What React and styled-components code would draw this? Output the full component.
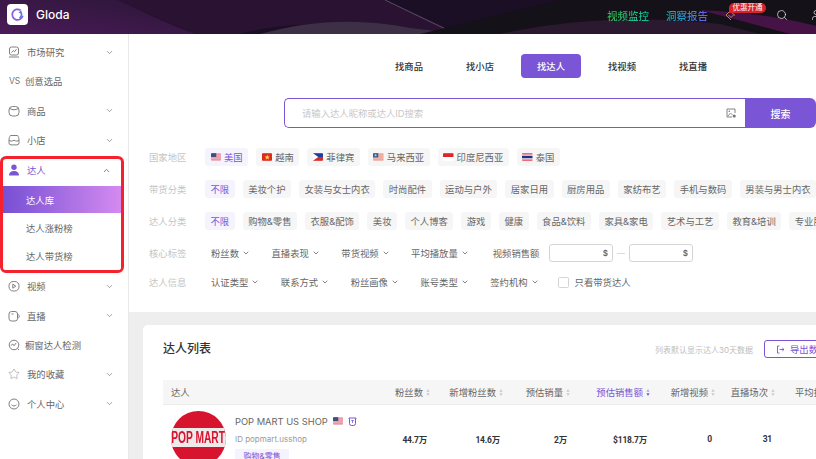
import React from "react"
import styled, { createGlobalStyle } from "styled-components"
import { ChevronDown, ChevronUp, Search, Star, User } from "lucide-react"

const purple = "#7a55d6"

const GlobalStyle = createGlobalStyle`
  html, body { margin: 0; padding: 0; background: #fff; }
  * { box-sizing: border-box; }
  body { font-family: Inter, "Noto Sans CJK SC", sans-serif; }
`

const Flag = ({ name }) => {
  const flags = {
    us: (
      <>
        <rect width="11" height="8" fill="#f6d5da" />
        <path d="M0 1h11M0 3h11M0 5h11M0 7h11" stroke="#e2707f" strokeWidth="1" />
        <rect width="5.500" height="4" fill="#3d4f85" />
      </>
    ),
    vn: (
      <>
        <rect width="11" height="8" fill="#e02a20" />
        <path d="M5.500 1.600l.8 2h2l-1.600 1.200.6 2-1.800-1.200-1.800 1.200.6-2-1.600-1.200h2z" fill="#fbd74a" />
      </>
    ),
    ph: (
      <>
        <rect width="11" height="4" fill="#1b3f9c" />
        <rect y="4" width="11" height="4" fill="#d92a2a" />
        <path d="M0 0l5.500 4-5.500 4z" fill="#fff" />
      </>
    ),
    my: (
      <>
        <rect width="11" height="8" fill="#f6d0c8" />
        <path d="M0 1h11M0 3h11M0 5h11M0 7h11" stroke="#e98a7d" strokeWidth="1" />
        <rect width="5.500" height="4.400" fill="#2f5d9a" />
        <circle cx="2.700" cy="2.200" r="1.100" fill="#f3d55b" />
      </>
    ),
    id: (
      <>
        <rect width="11" height="4" fill="#e0242c" />
        <rect y="4" width="11" height="4" fill="#fff" />
      </>
    ),
    th: (
      <>
        <rect width="11" height="8" fill="#f0f0f5" />
        <rect width="11" height="1.400" fill="#ee4a5e" />
        <rect y="2.700" width="11" height="2.600" fill="#242f86" />
        <rect y="6.600" width="11" height="1.400" fill="#ee4a5e" />
      </>
    ),
  }
  return <FlagSvg viewBox="0 0 11 8">{flags[name]}</FlagSvg>
}

const stroke = { fill: "none", stroke: "#808080", strokeWidth: 1 }

const icons = {
  market: (
    <g {...stroke}>
      <rect x="1.500" y="1" width="9" height="8" rx="2" />
      <path d="M3.500 6.500l1.800-1.800 1.200 1 2-2.500M1 11h10" />
    </g>
  ),
  goods: (
    <g {...stroke}>
      <rect x="1" y="1.500" width="10" height="9.500" rx="3.500" />
      <path d="M2 3.600c2.400 1.600 5.600 1.600 8 0" />
    </g>
  ),
  shop: (
    <g {...stroke}>
      <path d="M2.400 1.500h7.200c1 1.400 1.400 2.800 1.400 4.400v3a2 2 0 0 1-2 2H3a2 2 0 0 1-2-2v-3c0-1.600.4-3 1.400-4.400z" />
      <path d="M1 6.200c1.400 1.200 2.800 1.200 5 0 2.200 1.200 3.600 1.200 5 0" />
    </g>
  ),
  video: (
    <g {...stroke}>
      <rect x="1" y="1.500" width="10" height="9.500" rx="4.200" />
      <path d="M4.800 4.200l3 2-3 2z" />
    </g>
  ),
  live: (
    <g {...stroke}>
      <rect x="1" y="1.500" width="8.500" height="9.500" rx="2.500" />
      <path d="M9.500 4.500c1.200 0 1.800.8 1.800 1.800S10.700 8 9.500 8M3.500 4h2" />
    </g>
  ),
  check: (
    <g {...stroke}>
      <circle cx="6" cy="6" r="4.800" />
      <path d="M2.800 6.500l2-1.500 1.300 1.800 2-2.800M9.500 9.500l1.500 1.500" />
    </g>
  ),
  me: (
    <g {...stroke}>
      <circle cx="6" cy="6" r="5" />
      <path d="M3.500 6.800c1.400 1.500 3.600 1.500 5 0" />
    </g>
  ),
}

const NavIcon = ({ name }) => <NavSvg viewBox="0 0 12 12">{icons[name]}</NavSvg>

const SortIcon = ({ active }) => (
  <SortSvg viewBox="0 0 4 7">
    <path d="M2 0l1.600 2.700H.4z" fill={active ? "#b9a6ea" : "#c9c9c9"} />
    <path d="M2 7L.4 4.300h3.200z" fill={active ? purple : "#c9c9c9"} />
  </SortSvg>
)

const Dropdown = ({ children }) => (
  <DropItem>
    {children}
    <ChevronDown size={8} strokeWidth={2.400} />
  </DropItem>
)

const nav1 = [
  { icon: "market", text: "市场研究", more: true },
  { vs: true, text: "创意选品" },
  { icon: "goods", text: "商品", more: true },
  { icon: "shop", text: "小店", more: true },
]

const nav2 = [
  { icon: "video", text: "视频", more: true },
  { icon: "live", text: "直播", more: true },
  { icon: "check", text: "橱窗达人检测", tight: true },
  { star: true, text: "我的收藏", more: true },
  { icon: "me", text: "个人中心", more: true },
]

const renderNav = (item) => (
  <NavItem key={item.text}>
    {item.vs && <VsMark>VS</VsMark>}
    {item.icon && <NavIcon name={item.icon} />}
    {item.star && <Star size={12} strokeWidth={1} color="#808080" />}
    <NavText $tight={item.vs || item.tight}>{item.text}</NavText>
    {item.more && <NavChevron><ChevronDown size={9} strokeWidth={2} /></NavChevron>}
  </NavItem>
)

const countries = [
  ["us", "美国", true],
  ["vn", "越南"],
  ["ph", "菲律宾"],
  ["my", "马来西亚"],
  ["id", "印度尼西亚"],
  ["th", "泰国"],
]

const goods = ["美妆个护", "女装与女士内衣", "时尚配件", "运动与户外", "居家日用", "厨房用品", "家纺布艺", "手机与数码", "男装与男士内衣"]
const creators = ["购物&零售", "衣服&配饰", "美妆", "个人博客", "游戏", "健康", "食品&饮料", "家具&家电", "艺术与工艺", "教育&培训", "专业服务"]
const tabs = ["找商品", "找小店", "找达人", "找视频", "找直播"]

const columns = [
  { text: "粉丝数", value: "44.7万", width: 72 },
  { text: "新增粉丝数", value: "14.6万", width: 73 },
  { text: "预估销量", value: "2万", width: 67 },
  { text: "预估销售额", value: "$118.7万", width: 80, active: true },
  { text: "新增视频", value: "0", width: 65 },
  { text: "直播场次", value: "31", width: 60 },
]

export default function App() {
  return (
    <Page>
      <GlobalStyle />
      <Header>
        <HeaderArt viewBox="0 0 816 34" preserveAspectRatio="none">
          <defs>
            <linearGradient id="left" x1="0" y1="1" x2="1" y2="0">
              <stop offset="0" stopColor="#4a1a58" />
              <stop offset="1" stopColor="#2a1636" />
            </linearGradient>
          </defs>
          <path d="M0 0h118c30 14 50 24 78 34H0z" fill="url(#left)" />
          <path d="M150 0h235l75 34H420c-70-12-130-14-180 0h-44C170 24 140 10 118 0z" fill="#2a1233" />
          <path d="M260 34c50-14 100-16 150-6l50 6z" fill="#3d2f45" />
          <path d="M385 0l75 36" stroke="#6a5a70" strokeWidth=".8" />
          <path d="M420 34L560 0h256v34z" fill="#141118" />
          <path d="M500 34c70-16 150-18 220-10l40 10z" fill="#2b1930" />
          <path d="M700 10l90 24h26v-8c-30-8-70-14-116-16z" fill="#5a1458" opacity=".7" />
        </HeaderArt>
        <Logo>
          <svg viewBox="0 0 21 21" width="21" height="21">
            <rect width="21" height="21" rx="4" fill="#fff" />
            <path d="M13.500 6.200a5.300 5.300 0 1 0 2.200 5.600" fill="none" stroke="#8a5be8" strokeWidth="1.800" />
            <path d="M12.500 14a4 4 0 0 0 1.500-5.500" fill="none" stroke="#4a86e8" strokeWidth="1.700" />
            <path d="M11.500 8.800l2.700-2.800.7 3.600z" fill="#5a78e8" />
          </svg>
        </Logo>
        <Brand>Gloda</Brand>
        <HeaderRight>
          <GradientLink $from="#35c24e" $to="#10bfa0">视频监控</GradientLink>
          <GradientLink $from="#12b9b4" $to="#6a5df0">洞察报告</GradientLink>
          <VipWrap>
            <svg viewBox="0 0 12 12" width="12" height="12">
              <path d="M6 11L1 6l4-4 5 4.500M3.500 6L6 8.500 9 5.500" fill="none" stroke="#b08a4e" strokeWidth="1" />
            </svg>
            <VipBadge>优惠开通</VipBadge>
          </VipWrap>
          <Search size={12} strokeWidth={1.300} color="#fff" />
          <UserSlot>
            <User size={12} strokeWidth={1.300} color="#fff" />
          </UserSlot>
        </HeaderRight>
      </Header>
      <Body>
        <Sidebar>
          {nav1.map(renderNav)}
          <NavGroup>
            <GroupHead>
              <svg viewBox="0 0 12 12" width="12" height="12">
                <circle cx="6" cy="3.200" r="2.700" fill={purple} />
                <path d="M1 11.500c0-3 1.800-4.500 5-4.500s5 1.500 5 4.500z" fill={purple} />
              </svg>
              <NavText>达人</NavText>
              <NavChevron $active><ChevronUp size={9} strokeWidth={2.400} /></NavChevron>
            </GroupHead>
            <SubItem $active>达人库</SubItem>
            <SubItem>达人涨粉榜</SubItem>
            <SubItem>达人带货榜</SubItem>
          </NavGroup>
          {nav2.map(renderNav)}
        </Sidebar>
        <Main>
          <SearchPanel>
            <Tabs>
              {tabs.map((t) => (
                <Tab key={t} $active={t === "找达人"}>{t}</Tab>
              ))}
            </Tabs>
            <SearchBar>
              <SearchInput>
                请输入达人昵称或达人ID搜索
                <svg viewBox="0 0 10 10" width="10" height="10">
                  <path d="M9 5V1H1v8h5" fill="none" stroke="#777" strokeWidth=".9" />
                  <path d="M2 8l2.500-3 2 2" fill="none" stroke="#777" strokeWidth=".8" />
                  <circle cx="3.300" cy="3.200" r=".8" fill="#777" />
                  <circle cx="8.200" cy="8" r="1.600" fill="#777" />
                </svg>
              </SearchInput>
              <SearchButton>搜索</SearchButton>
            </SearchBar>
            <Filters>
              <FilterRow>
                <FilterLabel>国家地区</FilterLabel>
                {countries.map(([flag, name, active]) => (
                  <Chip key={flag} $active={active}>
                    <Flag name={flag} />
                    {name}
                  </Chip>
                ))}
              </FilterRow>
              <FilterRow>
                <FilterLabel>带货分类</FilterLabel>
                <Chip $active>不限</Chip>
                {goods.map((g) => <Chip key={g}>{g}</Chip>)}
              </FilterRow>
              <FilterRow>
                <FilterLabel>达人分类</FilterLabel>
                <Chip $active>不限</Chip>
                {creators.map((c) => <Chip key={c}>{c}</Chip>)}
              </FilterRow>
              <FilterRow $wide>
                <WideLabel>核心标签</WideLabel>
                <Dropdown>粉丝数</Dropdown>
                <Dropdown>直播表现</Dropdown>
                <Dropdown>带货视频</Dropdown>
                <Dropdown>平均播放量</Dropdown>
                <RangeLabel>视频销售额</RangeLabel>
                <RangeInput>$</RangeInput>
                <RangeDash />
                <RangeInput>$</RangeInput>
              </FilterRow>
              <FilterRow $wide $tight>
                <WideLabel>达人信息</WideLabel>
                <Dropdown>认证类型</Dropdown>
                <Dropdown>联系方式</Dropdown>
                <Dropdown>粉丝画像</Dropdown>
                <Dropdown>账号类型</Dropdown>
                <Dropdown>签约机构</Dropdown>
                <CheckLabel>
                  <CheckBox />
                  只看带货达人
                </CheckLabel>
              </FilterRow>
            </Filters>
          </SearchPanel>
          <Card>
            <CardHead>
              <CardTitle>达人列表</CardTitle>
              <CardNote>列表默认显示达人30天数据</CardNote>
              <ExportButton>
                <svg viewBox="0 0 9 9" width="9" height="9">
                  <path d="M3.500 1H1.500v7h2M3.500 4.500h4.500M6.300 3L8 4.500 6.300 6" fill="none" stroke={purple} strokeWidth=".9" />
                </svg>
                导出数据
              </ExportButton>
            </CardHead>
            <TableHead>
              <CreatorHead>达人</CreatorHead>
              {columns.map((c) => (
                <HeadCell key={c.text} $width={c.width} $active={c.active}>
                  {c.text}
                  <SortIcon active={c.active} />
                </HeadCell>
              ))}
              <LastHead>平均播放</LastHead>
            </TableHead>
            <TableRow>
              <CreatorCell>
                <Avatar>
                  <AvatarBand>
                    <AvatarText>POP MART</AvatarText>
                  </AvatarBand>
                </Avatar>
                <CreatorInfo>
                  <CreatorName>
                    POP MART US SHOP
                    <Flag name="us" />
                    <svg viewBox="0 0 9 9" width="9" height="9">
                      <path d="M1 1h7v1H7.500v4.500a2 2 0 0 1-2 2h-2a2 2 0 0 1-2-2V2H1z" fill="none" stroke={purple} strokeWidth="1" />
                      <path d="M4.500 3.500v2.500M3.200 3.500h2.600" stroke={purple} strokeWidth=".8" />
                    </svg>
                  </CreatorName>
                  <CreatorId>ID popmart.usshop</CreatorId>
                  <CreatorTag>购物&零售</CreatorTag>
                </CreatorInfo>
              </CreatorCell>
              {columns.map((c) => (
                <ValueCell key={c.text} $width={c.width}>{c.value}</ValueCell>
              ))}
            </TableRow>
          </Card>
        </Main>
      </Body>
    </Page>
  )
}

const Page = styled.div`
  width: 816px;
  height: 459px;
  overflow: hidden;
  display: flex;
  flex-direction: column;
`

const Header = styled.header`
  position: relative;
  height: 34px;
  flex: none;
  display: flex;
  align-items: flex-start;
  padding: 4px 0 0 7px;
  background: #1a0f24;
  overflow: hidden;
`

const HeaderArt = styled.svg`
  position: absolute;
  inset: 0;
  width: 100%;
  height: 100%;
`

const Logo = styled.div`
  position: relative;
  width: 21px;
  height: 21px;
  line-height: 0;
`

const Brand = styled.div`
  position: relative;
  margin-left: 8px;
  color: #fff;
  font-size: 12px;
  font-weight: 500;
  line-height: 22px;
`

const HeaderRight = styled.div`
  position: relative;
  margin-left: auto;
  display: flex;
  align-items: center;
  height: 22px;
  margin-right: -6px;
`

const UserSlot = styled.div`
  display: flex;
  margin-left: 22px;
`

const GradientLink = styled.div`
  font-size: 10.500px;
  font-weight: 500;
  margin-right: 17px;
  white-space: nowrap;
  background: linear-gradient(90deg, ${(p) => p.$from}, ${(p) => p.$to});
  -webkit-background-clip: text;
  background-clip: text;
  color: transparent;
`

const VipWrap = styled.div`
  position: relative;
  width: 51px;
  height: 12px;
  line-height: 0;
`

const VipBadge = styled.span`
  position: absolute;
  left: 4px;
  top: -6px;
  width: 37px;
  height: 10px;
  border-radius: 5px 5px 5px 0;
  background: #d8202f;
  color: #fff;
  font-size: 7.500px;
  line-height: 10px;
  text-align: center;
  white-space: nowrap;
`

const Body = styled.div`
  flex: 1;
  display: flex;
  min-height: 0;
`

const Sidebar = styled.aside`
  width: 129px;
  flex: none;
  padding-top: 3.400px;
  background: #fff;
  border-right: 1px solid #e8e8e8;
`

const NavItem = styled.div`
  display: flex;
  align-items: center;
  height: 29.330px;
  padding: 0 14px 0 8px;
  gap: 7px;
  color: #666;
  font-size: 9.330px;
  white-space: nowrap;
`

const NavSvg = styled.svg`
  width: 12px;
  height: 12px;
  flex: none;
`

const VsMark = styled.span`
  font-size: 8.500px;
  width: 11px;
  margin-left: 1px;
  color: #777;
`

const NavText = styled.span`
  margin-left: ${(p) => (p.$tight ? "-2px" : "0")};
`

const NavChevron = styled.span`
  margin-left: auto;
  display: flex;
  color: ${(p) => (p.$active ? purple : "#808080")};
`

const NavGroup = styled.div`
  width: 124px;
  margin: 1.600px 0 -1.500px;
  border: 3px solid #f5222d;
  border-radius: 6px;
  overflow: hidden;
  color: ${purple};
`

const GroupHead = styled.div`
  display: flex;
  align-items: center;
  height: 27px;
  padding: 0 10px 5px 5px;
  gap: 7px;
  font-size: 9.330px;
`

const SubItem = styled.div`
  height: ${(p) => (p.$active ? "27px" : "28.500px")};
  padding-left: 23px;
  display: flex;
  align-items: center;
  font-size: 9.330px;
  color: ${(p) => (p.$active ? "#fff" : "#666")};
  background: ${(p) => (p.$active ? "linear-gradient(90deg, #7650d4, #d48af0)" : "#fff")};
`

const Main = styled.main`
  flex: 1;
  min-width: 0;
  background: #eeeeee;
  overflow: hidden;
`

const SearchPanel = styled.section`
  height: 278px;
  background: #fff;
  padding: 20px 0 0 20px;
  white-space: nowrap;
`

const Tabs = styled.nav`
  display: flex;
  gap: 11px;
  margin-left: 230px;
`

const Tab = styled.div`
  width: 60px;
  height: 24px;
  border-radius: 4px;
  display: flex;
  align-items: center;
  justify-content: center;
  font-size: 9.330px;
  font-weight: 500;
  color: ${(p) => (p.$active ? "#fff" : "#333")};
  background: ${(p) => (p.$active ? purple : "transparent")};
`

const SearchBar = styled.div`
  display: flex;
  width: 532px;
  height: 30px;
  margin: 20px 0 0 135px;
`

const SearchInput = styled.div`
  flex: 1;
  display: flex;
  align-items: center;
  justify-content: space-between;
  padding: 0 9px 0 17px;
  border: 1px solid ${purple};
  border-right: 0;
  border-radius: 5px 0 0 5px;
  color: #c8c8c8;
  font-size: 9.330px;
`

const SearchButton = styled.div`
  width: 71px;
  display: flex;
  align-items: center;
  justify-content: center;
  background: ${purple};
  border-radius: 0 6px 6px 0;
  color: #fff;
  font-size: 10px;
  font-weight: 500;
`

const Filters = styled.div`
  display: flex;
  flex-direction: column;
  gap: 14px;
  margin-top: 20px;
`

const FilterRow = styled.div`
  display: flex;
  align-items: center;
  height: 18px;
  gap: ${(p) => (p.$wide ? "9.500px" : "8px")};
  margin-top: ${(p) => (p.$tight ? "-3px" : "0")};
`

const FilterLabel = styled.div`
  width: 48px;
  flex: none;
  color: #c4c4c4;
  font-size: 9.330px;
`

const WideLabel = styled(FilterLabel)`
  margin-right: -1.500px;
`

const Chip = styled.div`
  flex: none;
  display: flex;
  align-items: center;
  gap: 3px;
  height: 18px;
  padding: 0 5.500px;
  border-radius: 3px;
  font-size: 9.330px;
  color: ${(p) => (p.$active ? purple : "#666")};
  background: ${(p) => (p.$active ? "#f5f3fd" : "#f6f6f6")};
`

const FlagSvg = styled.svg`
  width: 10.500px;
  height: 8px;
  flex: none;
  border-radius: 1px;
`

const DropItem = styled.div`
  flex: none;
  display: flex;
  align-items: center;
  gap: 3px;
  padding: 0 6px;
  font-size: 9.330px;
  color: #666;
`

const RangeLabel = styled.div`
  margin-left: 8.500px;
  font-size: 9.330px;
  color: #666;
`

const RangeInput = styled.div`
  width: 64px;
  height: 18px;
  flex: none;
  display: flex;
  align-items: center;
  justify-content: flex-end;
  padding-right: 4px;
  border: 1px solid #d4d4d4;
  border-radius: 3px;
  font-size: 8px;
  font-weight: 600;
  color: #666;
`

const RangeDash = styled.div`
  width: 8px;
  height: 1px;
  flex: none;
  margin: 0 -5.500px;
  background: #dcdcdc;
`

const CheckLabel = styled.label`
  display: flex;
  align-items: center;
  gap: 6px;
  margin-left: 3.500px;
  font-size: 9.330px;
  color: #666;
`

const CheckBox = styled.span`
  width: 11px;
  height: 11px;
  border: 1px solid #d4d4d4;
  border-radius: 1.500px;
  background: #fff;
`

const Card = styled.section`
  width: 708px;
  height: 200px;
  margin: 13px 0 0 14px;
  padding: 15px 20px 0;
  background: #fff;
  border-radius: 5px;
`

const CardHead = styled.div`
  display: flex;
  align-items: center;
  height: 18px;
  white-space: nowrap;
`

const CardTitle = styled.h2`
  margin: -3px 0 0;
  font-size: 12px;
  font-weight: 500;
  color: #333;
`

const CardNote = styled.span`
  margin-left: auto;
  font-size: 8px;
  color: #bdbdbd;
`

const ExportButton = styled.div`
  width: 67px;
  height: 18px;
  margin-left: 11px;
  padding-left: 11px;
  display: flex;
  align-items: center;
  gap: 5px;
  flex: none;
  border: 1px solid ${purple};
  border-radius: 3px;
  font-size: 9.330px;
  color: ${purple};
`

const TableHead = styled.div`
  display: flex;
  align-items: center;
  height: 25px;
  margin-top: 22px;
  background: #f6f6f6;
  border-bottom: 1px solid #ececec;
  white-space: nowrap;
`

const CreatorHead = styled.div`
  width: 197px;
  flex: none;
  padding-left: 8px;
  font-size: 9.330px;
  color: #666;
`

const HeadCell = styled.div`
  width: ${(p) => p.$width}px;
  flex: none;
  display: flex;
  align-items: center;
  justify-content: flex-end;
  gap: 3px;
  padding-right: 2px;
  font-size: 9.330px;
  color: ${(p) => (p.$active ? purple : "#666")};
`

const SortSvg = styled.svg`
  width: 4px;
  height: 7px;
  flex: none;
`

const LastHead = styled.div`
  margin-left: 18px;
  font-size: 9.330px;
  color: #666;
`

const TableRow = styled.div`
  display: flex;
  align-items: flex-start;
  padding-top: 6px;
`

const CreatorCell = styled.div`
  width: 197px;
  flex: none;
  display: flex;
  padding-left: 8px;
  gap: 9px;
`

const Avatar = styled.div`
  width: 55px;
  height: 55px;
  flex: none;
  display: flex;
  align-items: center;
  border-radius: 50%;
  background: #d7142e;
  overflow: hidden;
`

const AvatarBand = styled.div`
  width: 100%;
  height: 19px;
  margin-top: -2px;
  background: #efeaea;
  display: flex;
  align-items: center;
  justify-content: center;
`

const AvatarText = styled.span`
  display: block;
  font-family: "Liberation Sans", sans-serif;
  font-size: 16px;
  font-weight: 700;
  line-height: 19px;
  color: #d7142e;
  white-space: nowrap;
  transform: scaleX(0.64);
`

const CreatorInfo = styled.div`
  display: flex;
  flex-direction: column;
  align-items: flex-start;
  padding-top: 4px;
`

const CreatorName = styled.div`
  display: flex;
  align-items: center;
  gap: 5px;
  height: 12px;
  font-size: 9.330px;
  color: #666;
  white-space: nowrap;
`

const CreatorId = styled.div`
  margin-top: 6px;
  height: 12px;
  line-height: 12px;
  font-size: 8px;
  color: #999;
`

const CreatorTag = styled.div`
  margin-top: 4px;
  height: 14px;
  padding: 0 8.500px;
  background: #f5f3fd;
  font-size: 8px;
  line-height: 14px;
  color: ${purple};
  white-space: nowrap;
`

const ValueCell = styled.div`
  width: ${(p) => p.$width}px;
  flex: none;
  height: 55px;
  display: flex;
  align-items: center;
  justify-content: flex-end;
  padding-right: 5px;
  font-family: Roboto, "Noto Sans CJK SC", sans-serif;
  font-size: 8.500px;
  font-weight: 700;
  letter-spacing: -0.200px;
  color: #333;
`
